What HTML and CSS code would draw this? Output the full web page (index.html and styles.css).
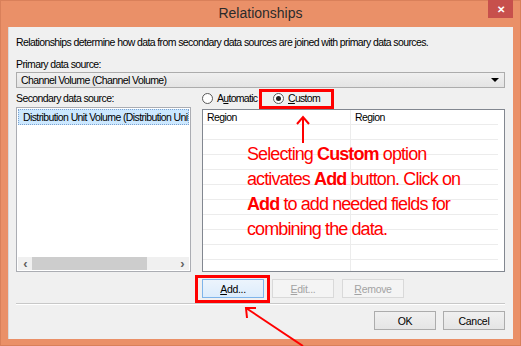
FILE: index.html
```html
<!DOCTYPE html>
<html lang="en">
<head>
    <meta charset="UTF-8">
    <title>Relationships</title>
    <link rel="stylesheet" href="styles.css">
</head>
<body>
    <div class="window">
        <!-- Title bar -->
        <div class="titlebar">
            <span class="title">Relationships</span>
            <div class="close-btn">&#x2715;</div>
        </div>

        <!-- Dialog content -->
        <div class="client">
            <p class="intro">Relationships determine how data from secondary data sources are joined with primary data sources.</p>

            <div class="label">Primary data source:</div>
            <div class="combo">
                <span>Channel Volume (Channel Volume)</span>
                <span class="combo-arrow"></span>
            </div>

            <div class="panels">
                <div class="left-panel">
                    <div class="label">Secondary data source:</div>
                    <div class="listbox">
                        <div class="list-item"><span class="item-text">Distribution Unit Volume (Distribution Unit Volume)</span></div>
                        <div class="hscroll">
                            <span class="scroll-arrow">&#x2039;</span>
                            <span class="scroll-track"><span class="scroll-thumb"></span></span>
                            <span class="scroll-arrow">&#x203A;</span>
                        </div>
                    </div>
                </div>

                <div class="right-panel">
                    <div class="radios">
                        <label class="radio auto"><span class="radio-dot"></span><span>A<u>u</u>tomatic</span></label>
                        <label class="radio checked"><span class="radio-dot"></span><span><u>C</u>ustom</span></label>
                    </div>
                    <div class="grid">
                        <div class="grid-row head">
                            <div class="cell">Region</div>
                            <div class="cell">Region</div>
                        </div>
                        <div class="grid-row"><div class="cell"></div><div class="cell"></div></div>
                        <div class="grid-row"><div class="cell"></div><div class="cell"></div></div>
                        <div class="grid-row"><div class="cell"></div><div class="cell"></div></div>
                        <div class="grid-row"><div class="cell"></div><div class="cell"></div></div>
                        <div class="grid-row"><div class="cell"></div><div class="cell"></div></div>
                        <div class="grid-row"><div class="cell"></div><div class="cell"></div></div>
                        <div class="grid-row"><div class="cell"></div><div class="cell"></div></div>
                        <div class="grid-row"><div class="cell"></div><div class="cell"></div></div>
                        <div class="grid-row"><div class="cell"></div><div class="cell"></div></div>
                        <div class="grid-row"><div class="cell"></div><div class="cell"></div></div>
                        <div class="grid-row"><div class="cell"></div><div class="cell"></div></div>
                    </div>
                </div>
            </div>

            <div class="edit-buttons">
                <button class="btn focused"><u>A</u>dd...</button>
                <button class="btn disabled"><u>E</u>dit...</button>
                <button class="btn disabled"><u>R</u>emove</button>
            </div>

            <div class="separator"></div>

            <div class="footer-buttons">
                <button class="btn">OK</button>
                <button class="btn">Cancel</button>
            </div>
        </div>
    </div>

    <!-- Annotations over the dialog -->
    <div class="mark mark-custom"></div>
    <div class="mark mark-add"></div>
    <p class="note">Selecting <b>Custom</b> option<br>activates <b>Add</b> button. Click on<br><b>Add</b> to add needed fields for<br>combining the data.</p>
    <svg class="arrows" width="521" height="346" viewBox="0 0 521 346">
        <g stroke="#ff0000" stroke-width="2" fill="none">
            <line x1="303" y1="143" x2="303" y2="117"/>
            <polyline points="297,124 303,117 309,124"/>
            <line x1="303" y1="346" x2="246" y2="308"/>
            <polyline points="247,318 246,308 256,308"/>
        </g>
    </svg>
</body>
</html>
```

FILE: styles.css
```css
body {
    margin: 0;
    font-family: 'Liberation Sans', Arial, sans-serif;
    font-size: 10.5px;
    letter-spacing: -0.6px;
    color: #000;
    background: #fff;
    position: relative;
    width: 521px;
    height: 346px;
    overflow: hidden;
}

/* Fenster */
.window {
    box-sizing: border-box;
    width: 521px;
    height: 346px;
    background: #ea9068;
    border: 1px solid #d9805a;
    padding: 0 7px 6px 7px;
    display: flex;
    flex-direction: column;
}

.titlebar {
    height: 26px;
    display: flex;
    justify-content: center;
    align-items: center;
    position: relative;
}

.title {
    font-size: 14px;
    letter-spacing: 0;
    color: #2b2b2b;
    margin-top: -2px;
}

.close-btn {
    position: absolute;
    top: -1px;
    right: 0;
    width: 25px;
    height: 18px;
    background: #c7504c;
    color: #fff;
    font-size: 10px;
    font-weight: bold;
    display: flex;
    justify-content: center;
    align-items: center;
}

.client {
    flex: 1;
    background: #f0f0f0;
    border-left: 1px solid #dadada;
    padding: 0 8px 0 7px;
    display: flex;
    flex-direction: column;
}

.intro {
    margin: 8px 0 0 0;
    line-height: 14px;
    white-space: nowrap;
}

.label {
    line-height: 14px;
}

.client > .label {
    margin-top: 8px;
}

/* Combobox */
.combo {
    box-sizing: border-box;
    height: 16px;
    margin-top: 1px;
    border: 1px solid #acacac;
    background: linear-gradient(#f0f0f0, #e4e4e4);
    display: flex;
    justify-content: space-between;
    align-items: center;
    padding: 0 5px 0 4px;
}

.combo-arrow {
    width: 0;
    height: 0;
    border-left: 4px solid transparent;
    border-right: 4px solid transparent;
    border-top: 4px solid #000;
}

.panels {
    display: flex;
    gap: 11px;
}

.left-panel {
    width: 175px;
    display: flex;
    flex-direction: column;
}

.left-panel .label {
    margin-top: 3px;
    margin-bottom: 2px;
}

.listbox {
    box-sizing: border-box;
    height: 165px;
    background: #fff;
    border: 1px solid #abadb3;
    display: flex;
    flex-direction: column;
    justify-content: space-between;
    overflow: hidden;
}

.list-item {
    margin: 1px;
    padding: 0 4px;
    line-height: 14px;
    border: 1px dotted #7da2ce;
    background: #cce8ff;
    white-space: nowrap;
    overflow: hidden;
}

.hscroll {
    height: 13px;
    margin: 0 1px 1px 1px;
    background: #f0f0f0;
    display: flex;
    align-items: center;
}

.scroll-arrow {
    width: 14px;
    text-align: center;
    font-size: 13px;
    font-weight: bold;
    color: #606060;
    line-height: 13px;
}

.scroll-track {
    flex: 1;
    height: 13px;
    display: flex;
}

.scroll-thumb {
    width: 115px;
    background: #cdcdcd;
}

.right-panel {
    flex: 1;
    display: flex;
    flex-direction: column;
}

.radios {
    display: flex;
    height: 20px;
    align-items: center;
}

.radio {
    display: flex;
    align-items: center;
    gap: 4px;
    letter-spacing: -0.7px;
}

.radio.auto {
    width: 71px;
    flex-shrink: 0;
}

.radio-dot {
    box-sizing: border-box;
    width: 11px;
    height: 11px;
    border-radius: 50%;
    border: 1px solid #5a5a5a;
    background: #fff;
    display: flex;
    justify-content: center;
    align-items: center;
}

.radio.checked .radio-dot::after {
    content: "";
    width: 5px;
    height: 5px;
    border-radius: 50%;
    background: #222;
}

/* Tabelle */
.grid {
    box-sizing: border-box;
    height: 163px;
    margin-top: 1px;
    background: #fff;
    border: 1px solid #828790;
    overflow: hidden;
    padding-right: 6px;
}

.grid-row {
    display: flex;
    height: 14px;
    border-bottom: 1px solid #ececec;
}

.cell {
    flex: 1;
    padding-left: 4px;
    line-height: 14px;
}

.cell + .cell {
    border-left: 1px solid #ececec;
}

/* Buttons */
.btn {
    box-sizing: border-box;
    width: 62px;
    height: 19px;
    padding: 0;
    font-family: 'Liberation Sans', Arial, sans-serif;
    font-size: 10.5px;
    letter-spacing: -0.3px;
    color: #000;
    border: 1px solid #acacac;
    background: linear-gradient(#f0f0f0, #e5e5e5);
}

.btn.focused {
    border-color: #7eb4ea;
    background: linear-gradient(#ecf4fc, #dcecfc);
}

.btn.disabled {
    border-color: #d9d9d9;
    background: #f4f4f4;
    color: #a3a3a3;
}

.edit-buttons {
    display: flex;
    gap: 8px;
    margin-top: 7px;
    margin-left: 186px;
}

.separator {
    margin-top: 5px;
    height: 1px;
    background: #c8c8c8;
    border-bottom: 1px solid #fff;
}

.footer-buttons {
    display: flex;
    justify-content: flex-end;
    gap: 7px;
    margin-top: 6px;
}

/* Rote Markierungen */
.mark {
    position: absolute;
    border: 3px solid #ff0000;
    box-sizing: border-box;
}

.mark-custom {
    left: 259px;
    top: 89px;
    width: 75px;
    height: 20px;
}

.mark-add {
    left: 195px;
    top: 275px;
    width: 75px;
    height: 28px;
}

.note {
    position: absolute;
    left: 247px;
    top: 142px;
    margin: 0;
    font-size: 18px;
    line-height: 25px;
    letter-spacing: -0.9px;
    color: #ff0000;
}

.arrows {
    position: absolute;
    left: 0;
    top: 0;
}
```
